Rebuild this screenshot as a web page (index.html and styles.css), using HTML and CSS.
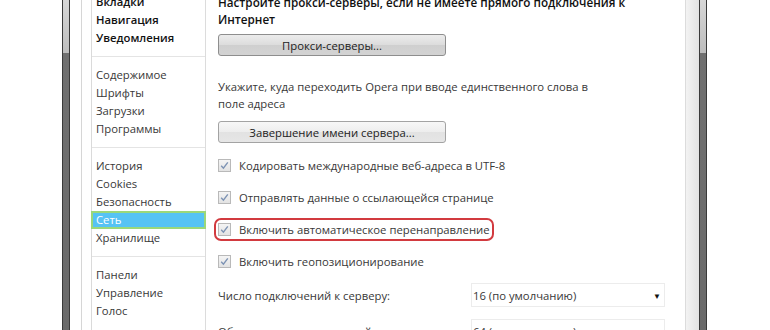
FILE: index.html
```html
<!DOCTYPE html>
<html lang="ru">

<head>
    <meta charset="UTF-8">
    <title>Настройки — Сеть</title>
    <link rel="stylesheet" href="styles.css">
</head>

<body>

    <div class="window">
        <div class="edge"></div>
        <div class="rail"></div>
        <div class="frame-gap"></div>

        <nav class="sidebar">
            <ul class="nav-group nav-main">
                <li>Вкладки</li>
                <li>Навигация</li>
                <li>Уведомления</li>
            </ul>
            <ul class="nav-group">
                <li>Содержимое</li>
                <li>Шрифты</li>
                <li>Загрузки</li>
                <li>Программы</li>
            </ul>
            <ul class="nav-group">
                <li>История</li>
                <li>Cookies</li>
                <li>Безопасность</li>
                <li class="active">Сеть</li>
                <li>Хранилище</li>
            </ul>
            <ul class="nav-group">
                <li>Панели</li>
                <li>Управление</li>
                <li>Голос</li>
            </ul>
        </nav>

        <main class="content">
            <p class="lead">Настройте прокси-серверы, если не имеете прямого подключения к Интернет</p>
            <button type="button" class="btn btn-pressed">Прокси-серверы...</button>

            <p class="text">Укажите, куда переходить Opera при вводе единственного слова в поле адреса</p>
            <button type="button" class="btn">Завершение имени сервера...</button>

            <div class="checks">
                <label class="check">
                    <span class="box"><svg viewBox="0 0 13 13" width="13" height="13"><path d="M3.2 6.8 L5.4 9.2 L9.8 3.4" fill="none" stroke="#7d93b4" stroke-width="1.4"/></svg></span>
                    Кодировать международные веб-адреса в UTF-8
                </label>
                <label class="check">
                    <span class="box"><svg viewBox="0 0 13 13" width="13" height="13"><path d="M3.2 6.8 L5.4 9.2 L9.8 3.4" fill="none" stroke="#7d93b4" stroke-width="1.4"/></svg></span>
                    Отправлять данные о ссылающейся странице
                </label>
                <label class="check marked">
                    <span class="box"><svg viewBox="0 0 13 13" width="13" height="13"><path d="M3.2 6.8 L5.4 9.2 L9.8 3.4" fill="none" stroke="#7d93b4" stroke-width="1.4"/></svg></span>
                    Включить автоматическое перенаправление
                </label>
                <label class="check">
                    <span class="box"><svg viewBox="0 0 13 13" width="13" height="13"><path d="M3.2 6.8 L5.4 9.2 L9.8 3.4" fill="none" stroke="#7d93b4" stroke-width="1.4"/></svg></span>
                    Включить геопозиционирование
                </label>
            </div>

            <div class="field">
                <span class="field-label">Число подключений к серверу:</span>
                <span class="select">16 (по умолчанию)<span class="arrow">▼</span></span>
            </div>
            <div class="field">
                <span class="field-label">Общее число подключений:</span>
                <span class="select">64 (по умолчанию)<span class="arrow">▼</span></span>
            </div>
        </main>

        <div class="frame-right"></div>
        <div class="rail"></div>
        <div class="edge-right"></div>
    </div>

</body>

</html>
```

FILE: styles.css
```css
body {
    margin: 0;
    height: 330px;
    overflow: hidden;
    background: #fff;
    color: #383838;
    font-family: 'Open Sans', 'Noto Sans', sans-serif;
    font-size: 11.3px;
}

.window {
    display: flex;
    height: 345px;
    margin-top: -7px;
}

.edge {
    width: 62px;
}

.edge-right {
    flex: 1;
}

.rail {
    width: 6px;
    border-left: 1px solid #3a3a3a;
    border-right: 1px solid #3a3a3a;
    background: linear-gradient(to bottom, #dadada 0, #bdbdbd 60px, #707070 60px, #6a6a6a 100%);
}

.frame-gap {
    width: 11px;
    border-right: 1px solid #d6d6d6;
    margin-right: 9px;
}

/* sidebar */

.sidebar {
    width: 115px;
    box-sizing: border-box;
    border-left: 1px solid #dadada;
    border-right: 1px solid #dcdcdc;
}

.nav-group {
    list-style: none;
    margin: 0;
    padding: 0;
    line-height: 18px;
}

.nav-group + .nav-group {
    border-top: 1px solid #e4e4e4;
    margin-top: 9px;
    padding-top: 9px;
}

.nav-group li {
    padding-left: 4px;
    white-space: nowrap;
}

.nav-main li {
    color: #111;
    font-weight: 600;
}

.nav-group li.active {
    margin: 0 -1px;
    padding-left: 5px;
    background: #56c3f4;
    color: #fff;
    box-shadow: inset 0 0 0 2px #9bd87a;
}

/* content */

.content {
    width: 480px;
    box-sizing: border-box;
    border-right: 1px solid #dcdcdc;
    padding: 1px 0 0 12px;
}

.lead,
.text {
    margin: 0;
    line-height: 17px;
}

.lead {
    width: 420px;
    color: #111;
    font-size: 11.7px;
    font-weight: 600;
}

.text {
    width: 380px;
    margin-top: 22px;
}

.btn {
    display: block;
    width: 228px;
    height: 22px;
    margin-top: 6px;
    padding: 0;
    border: 1px solid #a3a3a3;
    border-radius: 3px;
    background: linear-gradient(to bottom, #f7f7f7 0, #ededed 50%, #e2e2e2 51%, #e6e6e6 100%);
    color: #222;
    font-family: inherit;
    font-size: 11.3px;
}

.text + .btn {
    margin-top: 9px;
}

.btn-pressed {
    border-color: #8e8e8e;
    background: linear-gradient(to bottom, #ececec 0, #dcdcdc 50%, #cfcfcf 51%, #d3d3d3 100%);
}

.checks {
    display: flex;
    flex-direction: column;
    align-items: flex-start;
    gap: 17px;
    margin-top: 15px;
}

.check {
    display: flex;
    align-items: center;
    gap: 8px;
    height: 15px;
}

.box {
    width: 11px;
    height: 11px;
    border: 1px solid #b9b9b9;
    background: linear-gradient(to bottom, #f4f4f4, #e3e3e3);
}

.box svg {
    display: block;
    margin: -1px 0 0 -1px;
}

.marked {
    outline: 2px solid #d23a3f;
    outline-offset: 2px;
    border-radius: 3px;
}

.field {
    display: flex;
    align-items: center;
    height: 24px;
    margin-top: 14px;
}

.field + .field {
    margin-top: 12px;
}

.field-label {
    width: 253px;
}

.select {
    display: flex;
    align-items: center;
    justify-content: space-between;
    box-sizing: border-box;
    width: 194px;
    height: 24px;
    padding: 0 3px 0 1px;
    border: 1px solid #ececec;
}

.arrow {
    font-size: 8px;
    color: #111;
}

.frame-right {
    width: 13px;
    background: linear-gradient(to right, #f3f3f3, #e2e2e2);
}
```
